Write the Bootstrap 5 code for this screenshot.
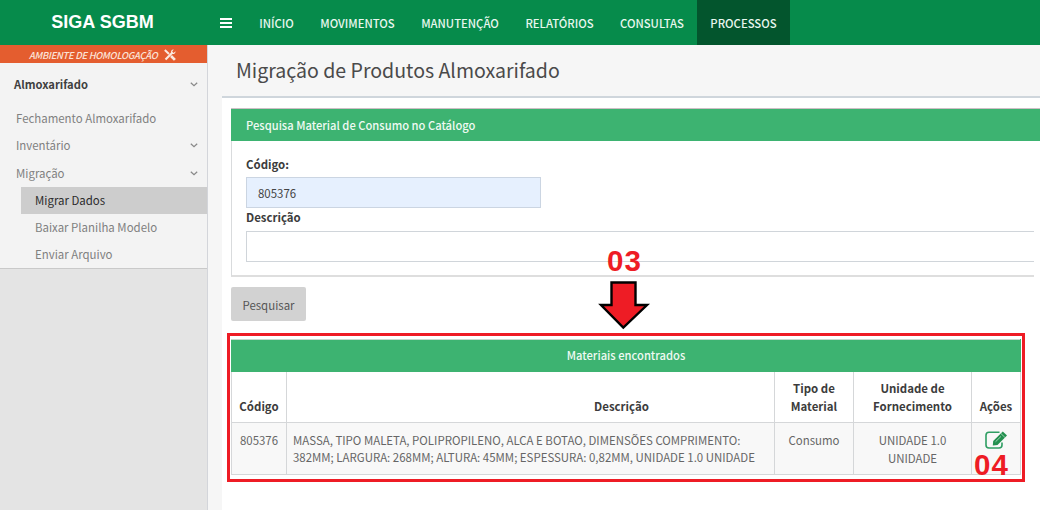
<!DOCTYPE html>
<html lang="pt-BR">
<head>
<meta charset="utf-8">
<meta name="viewport" content="width=device-width, initial-scale=1">
<title>SIGA SGBM</title>
<link href="https://cdn.jsdelivr.net/npm/bootstrap@5.3.0/dist/css/bootstrap.min.css" rel="stylesheet">
<style>
body{font-family:"Noto Sans CJK SC","Source Sans Pro",sans-serif;font-size:11.45px;line-height:18px;color:#666;background:#f6f6f6;height:510px;overflow:hidden}
.topbar{height:45px;background:#068b4b;color:#e9f7ef}
.brand{width:207px;font:bold 18px/45px "Liberation Sans",sans-serif;color:#fff;text-align:center;padding-right:2px}
.burger{width:39px;padding-left:13px}
.tab{height:45px;line-height:46px;text-align:center;font-size:11.3px;font-weight:500;white-space:nowrap}
.tab.on{background:#03552d}
.side{width:208px;height:465px;background:#e4e4e4;border-right:1px solid #d3d5da;flex:none}
.env{height:18px;background:#e45d2f;color:#fbe3d8;font-size:9.4px;line-height:20px;font-style:italic;font-weight:500;padding:2px 0 0 29px;letter-spacing:-.28px}
.menu{height:206px;background:#f3f3f3;border-bottom:1px solid #c9c9c9}
.menu div{white-space:nowrap}
.mi{height:27.3px;line-height:27px;padding:0 9px 0 16px;color:#808080}
.mi.top{height:42px;padding-left:14px}
.mi.top b{color:#3f3f3f;font-weight:700;font-size:11.2px}
.sub{height:27.3px;line-height:27px;margin-left:21px;padding-left:14px;color:#808080}
.sub.on{background:#cdcdcd;color:#2b2b2b}
.main{flex:1;min-width:0}
.title{height:51px;margin:0;padding-left:28px;font-size:19.55px;line-height:50px;font-weight:400;color:#4a4a4a}
.content{margin-left:14px;height:414px;background:#fff;border-top:2px solid #cfd6dc;padding:10px 0 0 9px}
.ghead{background:#3db371;color:#effaf3;font-weight:500;font-size:11.2px;height:32px;line-height:33px;padding-left:15px}
.panelbox{height:169px;border-top:1px solid #cdbfc5}
.pbody{width:803px;height:136px;border-left:1px solid #d9dbdd;border-bottom:2px solid #dedede;padding:14px 0 0 14px}
.lbl{font-weight:700;color:#3c3c3c;display:block;line-height:18px}
.fld{border:1px solid #d0d5da;height:31px;display:block;padding:0 11px;color:#444;font-size:11.45px;border-radius:0;outline:0;margin-top:4px}
.fld.fill{background:#e6f0fe;width:295px;border-color:#cbd5e2}
.fld.open{border-right:0;width:788px;background:#fff;margin-top:5px}
.btn-s{width:75px;height:34px;background:#d2d2d2;border:0;border-radius:2px;color:#555;font-size:11.45px;padding:2px 0 0;display:block;margin-top:10px}
.hl{position:relative;width:798px;height:149px;margin:12px 0 0 -4px;border:3px solid #ee1c25;padding:3px 1px 0}
.grid{width:789px;table-layout:fixed;border-collapse:collapse}
.grid td,.grid th{border:1px solid #d5d7d9;text-align:center;padding:0}
.grid .ghead th{border-color:#c6d8cd #3db371 #3db371;height:32px;line-height:31px;color:#effaf3;font-weight:500}
.grid .cols th{height:51px;vertical-align:bottom;padding-bottom:7px;color:#3c3c3c;font-weight:700}
.grid .vals td{height:52px;vertical-align:top;padding-top:8px;background:#f8f8f8;color:#666}
.grid .vals td.desc{text-align:left;padding-left:6px;white-space:nowrap;line-height:17px;padding-top:9px}
.num{position:absolute;font:bold 29.5px/30px "Liberation Sans",sans-serif;color:#ee1c25;letter-spacing:1px}
</style>
</head>
<body>
<nav class="topbar d-flex">
  <div class="brand">SIGA SGBM</div>
  <div class="burger d-flex align-items-center"><svg width="12" height="10" viewBox="0 0 12 10"><path d="M0 1h12M0 5h12M0 9h12" stroke="#fff" stroke-width="2"/></svg></div>
  <div class="tab" style="width:61px">INÍCIO</div>
  <div class="tab" style="width:101px">MOVIMENTOS</div>
  <div class="tab" style="width:104px">MANUTENÇÃO</div>
  <div class="tab" style="width:95px">RELATÓRIOS</div>
  <div class="tab" style="width:90px">CONSULTAS</div>
  <div class="tab on" style="width:93px">PROCESSOS</div>
</nav>
<div class="d-flex">
  <aside class="side">
    <div class="env d-flex align-items-center"><span>AMBIENTE DE HOMOLOGAÇÃO</span>
      <svg style="margin:0 0 0 6px" width="12" height="12" viewBox="0 0 12 12" fill="none" stroke="#fbe9e0"><path d="M1.500 10.500 8 4" stroke-width="2.200"/><path d="M11.500 2.200 9.600 3.900 8.200 2.600 9.800.6C8 .2 6.500 2 7 4L8.200 5C10 5.500 11.900 3.800 11.500 2.200Z" fill="#fbe9e0" stroke="none"/><path d="M.8 1 5 5" stroke-width="2"/><path d="M7 7l3.900 3.900" stroke-width="2.700"/></svg>
    </div>
    <div class="menu">
      <div class="mi top d-flex justify-content-between align-items-center"><b>Almoxarifado</b><svg width="8" height="5" viewBox="0 0 8 5" fill="none" stroke="#888" stroke-width="1.200"><path d="M.8.8 4 3.800 7.200.8"/></svg></div>
      <div class="mi">Fechamento Almoxarifado</div>
      <div class="mi d-flex justify-content-between align-items-center"><span>Inventário</span><svg width="8" height="5" viewBox="0 0 8 5" fill="none" stroke="#888" stroke-width="1.200"><path d="M.8.8 4 3.800 7.200.8"/></svg></div>
      <div class="mi d-flex justify-content-between align-items-center"><span>Migração</span><svg width="8" height="5" viewBox="0 0 8 5" fill="none" stroke="#888" stroke-width="1.200"><path d="M.8.8 4 3.800 7.200.8"/></svg></div>
      <div class="sub on">Migrar Dados</div>
      <div class="sub">Baixar Planilha Modelo</div>
      <div class="sub">Enviar Arquivo</div>
    </div>
  </aside>
  <main class="main">
    <h1 class="title">Migração de Produtos Almoxarifado</h1>
    <div class="content">
      <section class="panelbox">
        <div class="ghead">Pesquisa Material de Consumo no Catálogo</div>
        <div class="pbody">
          <label class="lbl" for="cod">Código:</label>
          <input class="fld fill" id="cod" value="805376">
          <label class="lbl" for="desc">Descrição</label>
          <input class="fld open" id="desc">
        </div>
      </section>
      <button class="btn-s" type="button">Pesquisar</button>
      <section class="hl">
        <table class="grid">
          <colgroup><col style="width:55px"><col style="width:488px"><col style="width:79px"><col style="width:118px"><col style="width:49px"></colgroup>
          <tr class="ghead"><th colspan="5">Materiais encontrados</th></tr>
          <tr class="cols"><th>Código</th><th><span style="padding-left:182px">Descrição</span></th><th>Tipo de<br>Material</th><th>Unidade de<br>Fornecimento</th><th>Ações</th></tr>
          <tr class="vals"><td>805376</td><td class="desc">MASSA, TIPO MALETA, POLIPROPILENO, ALCA E BOTAO, DIMENSÕES COMPRIMENTO:<br>382MM; LARGURA: 268MM; ALTURA: 45MM; ESPESSURA: 0,82MM, UNIDADE 1.0 UNIDADE</td><td>Consumo</td><td>UNIDADE 1.0<br>UNIDADE</td>
          <td><svg class="d-block mx-auto" width="23" height="18" viewBox="0 0 23 18" fill="none"><path d="M14.500 1.200H4Q1 1.200 1 4.200V14Q1 17 4 17H14Q17 17 17 14V11.500" stroke="#2f9e63" stroke-width="1.600"/><path d="M8.200 10 17.800.6 22 4.600 12.500 14 7.800 14.500Z" fill="#23904f"/><path d="M16 2.600 19.900 6.400M10.500 10.800 16 5.400" stroke="#bfe3cd" stroke-width=".8"/></svg></td></tr>
        </table>
        <span class="num" style="left:377px;top:-90px">03</span>
        <svg class="position-absolute" style="left:367px;top:-56px" width="54" height="50" viewBox="0 0 54 50"><path d="M14.500 2.500H38.500V25H50L26.300 47.500 4 25H14.500Z" fill="#ee1c25" stroke="#000" stroke-width="2.400"/></svg>
        <span class="num" style="left:744px;top:114px">04</span>
      </section>
    </div>
  </main>
</div>
<script src="https://cdn.jsdelivr.net/npm/bootstrap@5.3.0/dist/js/bootstrap.bundle.min.js"></script>
</body>
</html>
